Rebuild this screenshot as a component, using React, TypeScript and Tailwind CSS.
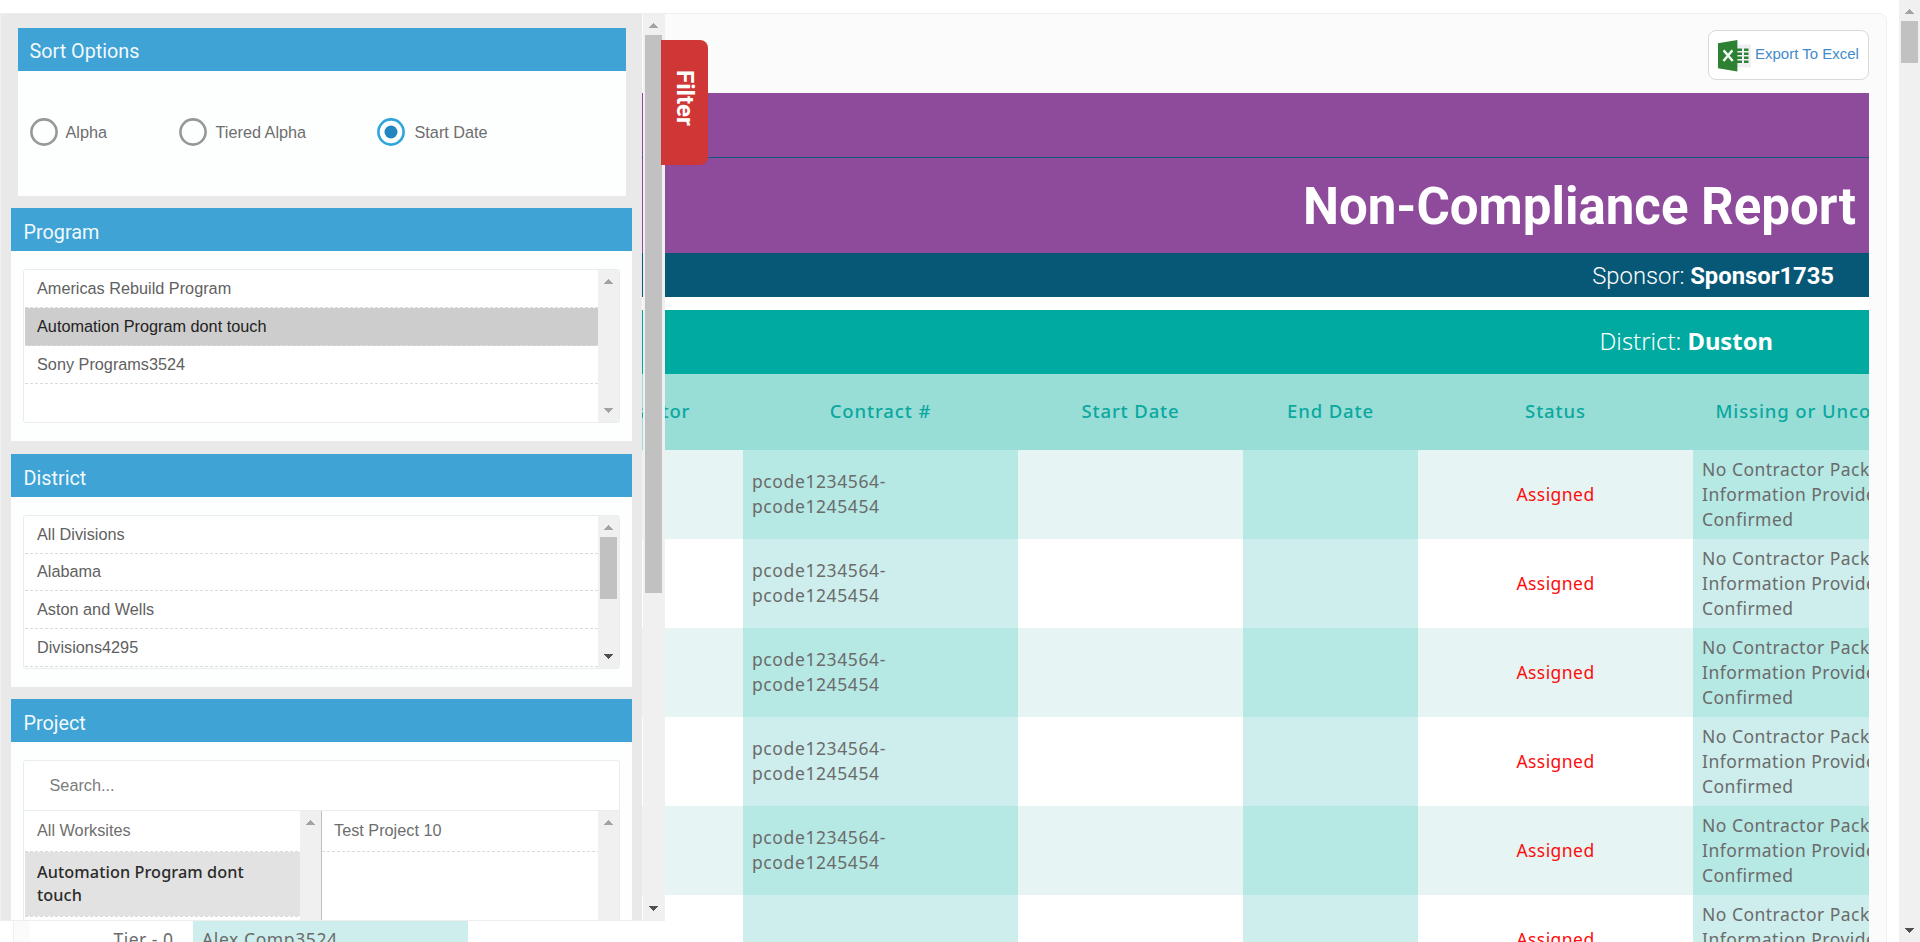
import React from "react";

const arial = "font-['Liberation_Sans',Arial,sans-serif]";

function Arrow({ up, dark }: { up?: boolean; dark?: boolean }) {
  return (
    <svg width="9" height="5" viewBox="0 0 9 5" shapeRendering="crispEdges" className={dark ? "fill-[#505050]" : "fill-[#a3a3a3]"}>
      {up ? <path d="M4 0h1v1h1v1h1v1h1v1h1v1H0V4h1V3h1V2h1V1h1z" /> : <path d="M0 0h9v1H8v1H7v1H6v1H5v1H4V4H3V3H2V2H1V1H0z" />}
    </svg>
  );
}

function Scrollbar({ thumb, down }: { thumb?: string; down?: "on" | "off" }) {
  return (
    <div className="flex w-[21px] shrink-0 flex-col items-center bg-[#f0f0f0] py-[9px]">
      <Arrow up />
      {thumb && <div className={`w-[17px] shrink-0 bg-[#c1c1c1] ${thumb}`} />}
      <div className="flex-1" />
      {down && <Arrow dark={down === "on"} />}
    </div>
  );
}

function Title({ children, pad = "pl-[12.5px] pt-[5px]" }: { children: React.ReactNode; pad?: string }) {
  return (
    <div className={`h-[43px] bg-[#3fa4d5] font-[Roboto,sans-serif] text-[19.8px] leading-[40px] text-white/95 ${pad}`}>
      {children}
    </div>
  );
}

function Radio({ label, on, width, gap }: { label: string; on?: boolean; width: string; gap: string }) {
  return (
    <label className={`flex items-center text-[16.25px] text-[#6e6e6e] ${width} ${gap} ${arial}`}>
      <svg width="28" height="28" viewBox="0 0 28 28" fill="none">
        <circle cx="14" cy="14" r="12.6" stroke={on ? "#2fa5dc" : "#979797"} strokeWidth="2.6" />
        {on && <circle cx="14" cy="14" r="6.5" fill="#2385bf" />}
      </svg>
      <span className="pt-px">{label}</span>
    </label>
  );
}

const dash = "h-px w-full shrink-0 bg-[repeating-linear-gradient(90deg,#dadada_0_3px,transparent_3px_5px)]";

function List({ items, selected, row, thumb }: { items: string[]; selected?: number; row: string; thumb?: boolean }) {
  return (
    <div className="mx-3 mt-[18px] flex h-[154px] overflow-hidden rounded-[3px] border border-[#e9eded] bg-white">
      <div className="min-w-0 flex-1 pl-px">
        {items.map((t, i) => (
          <div key={t} className={`flex flex-col ${row} ${arial} text-[16.25px] ${i === selected ? "bg-[#cdcdcd] text-[#222]" : "text-[#616161]"}`}>
            <div className="min-h-0 flex-1 pl-[12px] leading-[36.6px]">{t}</div>
            <div className={dash} />
          </div>
        ))}
      </div>
      <Scrollbar thumb={thumb ? "mt-[7px] h-[62px]" : undefined} down={thumb ? "on" : "off"} />
    </div>
  );
}

function Sidebar() {
  return (
    <aside className="absolute top-[13px] left-0 flex h-[908px] w-[665px] overflow-hidden border-y border-[#eeeeee]">
      <div className="flex w-[642px] shrink-0 flex-col overflow-hidden border-l border-[#f0f0f0] bg-[#e9e9e9]">
        <section className="mt-[14px] ml-[17px] h-[168px] w-[608px] shrink-0 bg-[#fdfefe]">
          <Title pad="pl-[11.5px] pt-[4px]">Sort Options</Title>
          <div className="flex items-center pt-[47px] pl-[11.5px]">
            <Radio label="Alpha" width="w-[149px]" gap="gap-[8px]" />
            <Radio label="Tiered Alpha" width="w-[198.5px]" gap="gap-[9px]" />
            <Radio label="Start Date" on width="w-[140px]" gap="gap-[9.5px]" />
          </div>
        </section>
        <section className="mt-[12px] ml-[10px] h-[233px] w-[621px] shrink-0 bg-[#fdfefe]">
          <Title>Program</Title>
          <List items={["Americas Rebuild Program", "Automation Program dont touch", "Sony Programs3524"]} selected={1} row="h-[38px]" />
        </section>
        <section className="mt-[13px] ml-[10px] h-[233px] w-[621px] shrink-0 bg-[#fdfefe]">
          <Title>District</Title>
          <List items={["All Divisions", "Alabama", "Aston and Wells", "Divisions4295"]} row="h-[37.7px] nth-2:h-[37.3px] nth-2:-mt-[0.4px] nth-3:mt-[0.8px]" thumb />
        </section>
        <section className="mt-[12px] ml-[10px] h-[233px] w-[621px] shrink-0 bg-[#fdfefe]">
          <Title>Project</Title>
          <div className="mx-3 mt-[18px] flex h-[260px] flex-col rounded-[3px] border border-[#e9eded] bg-white">
            <div className={`h-[50px] shrink-0 border-b border-[#e9eded] pl-[25.5px] text-[16.25px] leading-[49px] text-[#7c7c7c] ${arial}`}>Search...</div>
            <div className="flex flex-1">
              <div className="w-[276px] pl-px text-[16px]">
                <div className={`h-[40px] pl-[12px] text-[16.25px] leading-[39px] text-[#6e6e6e] ${arial}`}>All Worksites</div>
                <div className={dash} />
                <div className="h-[64px] bg-[#e2e2e2] pt-[9px] pr-[30px] pl-[12px] font-['Noto_Sans',sans-serif] text-[16.25px] leading-[23px] font-medium tracking-[0.08px] text-[#2b2b2b]">
                  Automation Program dont touch
                </div>
                <div className={dash} />
              </div>
              <Scrollbar />
              <div className={`w-[277px] border-l border-[#bfbfbf] text-[16.25px] text-[#6e6e6e] ${arial}`}>
                <div className="h-[40px] pl-[12px] leading-[39px]">Test Project 10</div>
                <div className={dash} />
              </div>
              <Scrollbar />
            </div>
          </div>
        </section>
      </div>
      <div className="w-px shrink-0" />
      <div className="flex w-[22px] bg-[#f0f0f0]">
        <Scrollbar thumb="mt-[7px] h-[558px]" down="on" />
      </div>
    </aside>
  );
}

function ExcelIcon() {
  return (
    <svg width="34" height="32" viewBox="0 0 34 32" className="shrink-0">
      <path fill="#eef0f3" d="M19 4.5h14v23H19z" />
      <path stroke="#2e8133" strokeWidth="2.4" d="M19 9.7h5M26 9.7h4.5M19 13.7h5M26 13.7h4.5M19 17.7h5M26 17.7h4.5M19 21.8h5M26 21.8h4.5" />
      <path fill="#2e8133" d="M0 3.3 19.4 0v31.5L0 28.2z" />
      <path stroke="#f4faf4" strokeWidth="2.4" fill="none" d="M5.6 10.4 14.8 21M14.4 10.4 5.4 21" />
    </svg>
  );
}

const cols = "grid grid-cols-[163px_275px_275px_275px_225px_175px_275px_330px]";

function Row({ shaded, code = true }: { shaded: boolean; code?: boolean }) {
  const tint = shaded ? "bg-[#b6e8e4]" : "bg-[#cdeeec]";
  return (
    <div className={`${cols} h-[89px] items-stretch text-[17.5px] leading-[25px] tracking-[0.44px] text-[#6b6b6b] ${shaded ? "bg-[#e6f5f4]" : "bg-white"}`}>
      <div className="flex items-center justify-end pr-[19.5px] tracking-[0.5px]">Tier - 0</div>
      <div className={`flex items-center pl-[9px] tracking-[0.6px] ${tint}`}>Alex Comp3524</div>
      <div />
      <div className={`flex items-center pb-[2px] pl-[9px] tracking-[0.6px] ${tint}`}>
        {code && <span>pcode1234564-<br />pcode1245454</span>}
      </div>
      <div />
      <div className={tint} />
      <div className="flex items-center justify-center text-[#fd0d0d]">Assigned</div>
      <div className={`flex items-center pl-[9px] tracking-[0.48px] whitespace-nowrap ${tint}`}>
        <span>No Contractor Package<br />Information Provided or<br />Confirmed</span>
      </div>
    </div>
  );
}

export default function App() {
  return (
    <div className="relative flex h-[942px] w-[1920px] overflow-hidden bg-white font-['Noto_Sans',sans-serif]">
      <main className="mt-[13px] ml-[13px] h-[1000px] w-[1874px] shrink-0 rounded-lg border border-[#efefef] bg-[#fbfbfb] pt-[16px] pr-[17px] pl-[16px]">
        <div className="flex h-[63px] items-start justify-end">
          <button className={`flex h-[50px] w-[161px] items-start rounded-lg border border-[#dadada] bg-white pt-[9px] pl-[9px] text-[15px] text-[#428bca] ${arial}`}>
            <ExcelIcon />
            <span className="ml-[3px] leading-[27px] whitespace-nowrap">Export To Excel</span>
          </button>
        </div>
        <div className="overflow-hidden bg-white">
          <div className="h-[65px] border-b border-[#115580] bg-[#8e4a9b]" />
          <div className="flex h-[95px] items-center justify-end bg-[#8e4a9b] pt-[4px] pr-[13px] font-[Roboto,sans-serif] text-[51px] font-bold text-white">
            Non-Compliance Report
          </div>
          <div className="flex h-[44px] items-center justify-end bg-[#075876] pt-[3px] pr-[35px] font-[Roboto,sans-serif] text-[23.8px] font-light text-white">
            <span className="whitespace-pre">Sponsor: <b className="font-bold">Sponsor1735</b></span>
          </div>
          <div className="mt-[13px] flex h-[64px] items-center justify-end bg-[#00aaa0] pr-[96px] text-[23.8px] font-light text-white">
            <span className="whitespace-pre">District: <b className="font-bold">Duston</b></span>
          </div>
          <div className={`${cols} h-[76px] items-center bg-[#99ddd7] pb-[2px] text-center text-[18.5px] font-medium tracking-[0.88px] whitespace-nowrap text-[#0aa89f]`}>
            <div>Tier</div>
            <div>Contractor</div>
            <div>Hiring Contractor</div>
            <div>Contract #</div>
            <div>Start Date</div>
            <div>End Date</div>
            <div>Status</div>
            <div className="pl-[22.5px] text-left">Missing or Unconfirmed</div>
          </div>
          <Row shaded />
          <Row shaded={false} />
          <Row shaded />
          <Row shaded={false} />
          <Row shaded />
          <Row shaded={false} code={false} />
        </div>
      </main>
      <div className="ml-[12px] flex shrink-0">
        <Scrollbar thumb="mt-[7px] h-[42px]" down="on" />
      </div>
      <Sidebar />
      <div className="absolute top-[40px] left-[661px] flex h-[125px] w-[47px] items-center justify-center rounded-r-lg bg-[#cf3736] pb-[9px] font-[Roboto,sans-serif] text-[24px] leading-none font-bold text-white [writing-mode:vertical-rl]">
        Filter
      </div>
    </div>
  );
}
